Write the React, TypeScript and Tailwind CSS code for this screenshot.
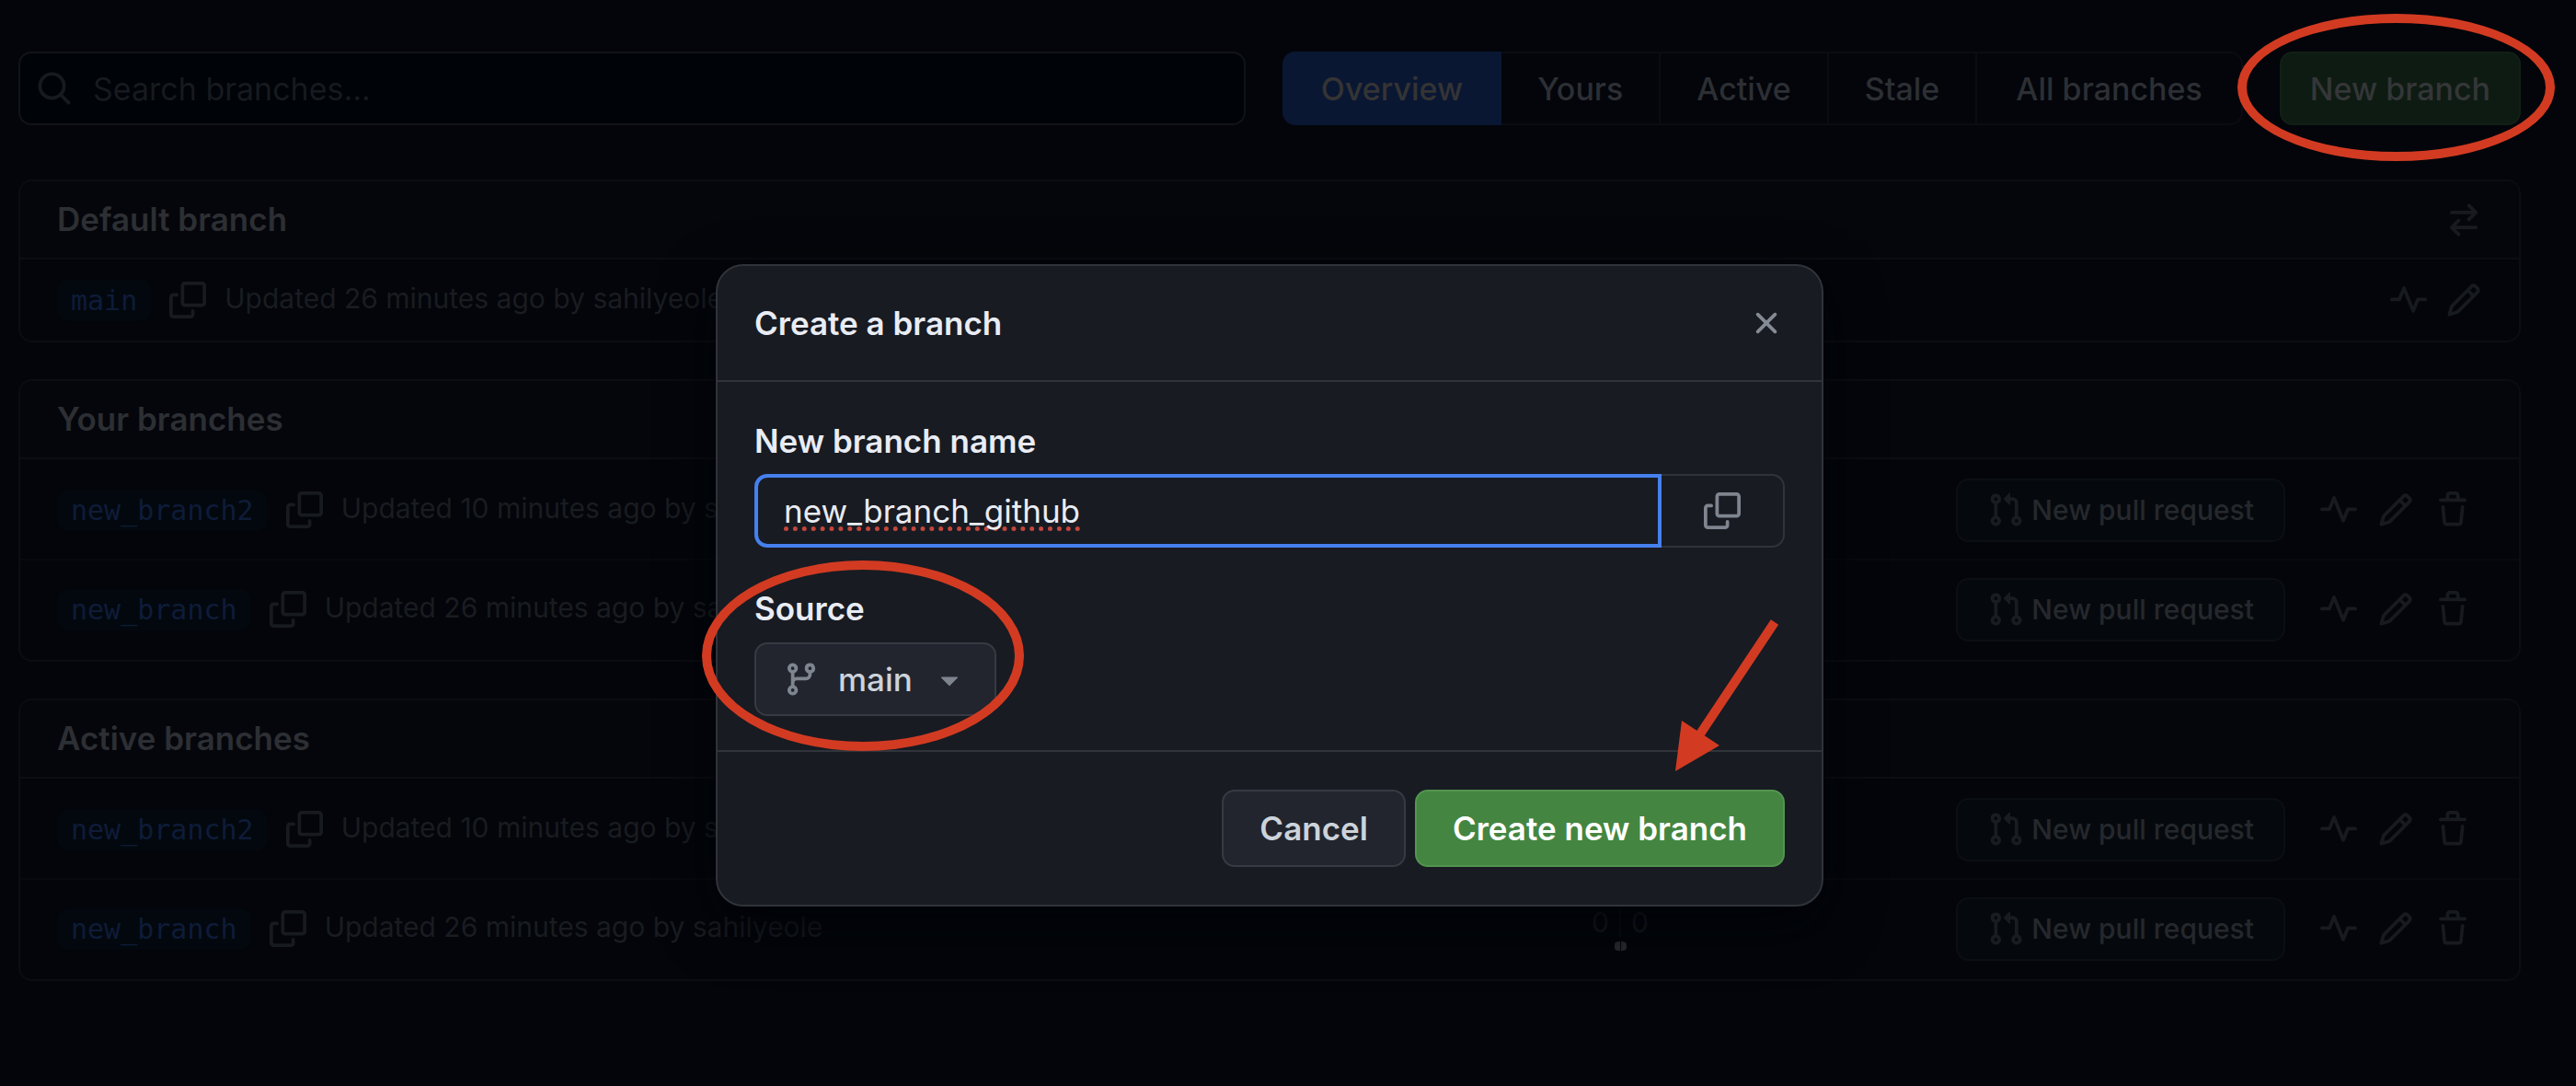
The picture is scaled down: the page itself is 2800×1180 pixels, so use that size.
import React from "react";

const ICONS = {
  search:
    "M10.68 11.74a6 6 0 0 1-7.922-8.982 6 6 0 0 1 8.982 7.922l3.04 3.04a.749.749 0 0 1-.326 1.275.749.749 0 0 1-.734-.215ZM11.5 7a4.499 4.499 0 1 0-8.997 0A4.499 4.499 0 0 0 11.5 7Z",
  copy: "M0 6.75C0 5.784.784 5 1.75 5h1.5a.75.75 0 0 1 0 1.5h-1.5a.25.25 0 0 0-.25.25v7.5c0 .138.112.25.25.25h7.5a.25.25 0 0 0 .25-.25v-1.5a.75.75 0 0 1 1.5 0v1.5A1.75 1.75 0 0 1 9.25 16h-7.5A1.75 1.75 0 0 1 0 14.25ZM5 1.75C5 .784 5.784 0 6.75 0h7.5C15.216 0 16 .784 16 1.75v7.5A1.75 1.75 0 0 1 14.25 11h-7.5A1.75 1.75 0 0 1 5 9.25Zm1.75-.25a.25.25 0 0 0-.25.25v7.5c0 .138.112.25.25.25h7.5a.25.25 0 0 0 .25-.25v-7.5a.25.25 0 0 0-.25-.25Z",
  pulse:
    "M6 2c.306 0 .582.187.696.471L10 10.731l1.304-3.26A.751.751 0 0 1 12 7h3.25a.75.75 0 0 1 0 1.5h-2.742l-1.812 4.528a.751.751 0 0 1-1.392 0L6 4.77 4.696 8.03A.75.75 0 0 1 4 8.5H.75a.75.75 0 0 1 0-1.5h2.742l1.812-4.529A.751.751 0 0 1 6 2Z",
  pencil:
    "M11.013 1.427a1.75 1.75 0 0 1 2.474 0l1.086 1.086a1.75 1.75 0 0 1 0 2.474l-8.61 8.61c-.21.21-.47.364-.756.445l-3.251.93a.75.75 0 0 1-.927-.928l.929-3.25c.081-.286.235-.547.445-.758l8.61-8.61Zm.176 4.823L9.75 4.81l-6.286 6.287a.253.253 0 0 0-.064.108l-.558 1.953 1.953-.558a.253.253 0 0 0 .108-.064Zm1.238-3.763a.25.25 0 0 0-.354 0L10.811 3.75l1.439 1.44 1.263-1.263a.25.25 0 0 0 0-.354Z",
  trash:
    "M11 1.75V3h2.25a.75.75 0 0 1 0 1.5H2.75a.75.75 0 0 1 0-1.5H5V1.75C5 .784 5.784 0 6.75 0h2.5C10.216 0 11 .784 11 1.75ZM4.496 6.675l.66 6.6a.25.25 0 0 0 .249.225h5.19a.25.25 0 0 0 .249-.225l.66-6.6a.75.75 0 0 1 1.492.149l-.66 6.6A1.748 1.748 0 0 1 10.595 15h-5.19a1.75 1.75 0 0 1-1.741-1.575l-.66-6.6a.75.75 0 1 1 1.492-.15ZM6.5 1.75V3h3V1.75a.25.25 0 0 0-.25-.25h-2.5a.25.25 0 0 0-.25.25Z",
  branch:
    "M9.5 3.25a2.25 2.25 0 1 1 3 2.122V6A2.5 2.5 0 0 1 10 8.5H6a1 1 0 0 0-1 1v1.128a2.251 2.251 0 1 1-1.5 0V5.372a2.25 2.25 0 1 1 1.5 0v1.836A2.493 2.493 0 0 1 6 7h4a1 1 0 0 0 1-1v-.628A2.25 2.25 0 0 1 9.5 3.25Zm-6 0a.75.75 0 1 0 1.5 0 .75.75 0 0 0-1.5 0Zm8.25-.75a.75.75 0 1 0 0 1.5.75.75 0 0 0 0-1.5ZM4.25 12a.75.75 0 1 0 0 1.5.75.75 0 0 0 0-1.5Z",
  pullRequest:
    "M1.5 3.25a2.25 2.25 0 1 1 3 2.122v5.256a2.251 2.251 0 1 1-1.5 0V5.372A2.25 2.25 0 0 1 1.5 3.25Zm5.677-.177L9.573.677A.25.25 0 0 1 10 .854V2.5h1A2.5 2.5 0 0 1 13.5 5v5.628a2.251 2.251 0 1 1-1.5 0V5a1 1 0 0 0-1-1h-1v1.646a.25.25 0 0 1-.427.177L7.177 3.427a.25.25 0 0 1 0-.354ZM3.75 2.5a.75.75 0 1 0 0 1.5.75.75 0 0 0 0-1.5Zm0 9.5a.75.75 0 1 0 0 1.5.75.75 0 0 0 0-1.5Zm8.25.75a.75.75 0 1 0 1.5 0 .75.75 0 0 0-1.5 0Z",
  arrowSwitch:
    "M5.22 14.78a.75.75 0 0 0 1.06-1.06L4.56 12h8.69a.75.75 0 0 0 0-1.5H4.56l1.72-1.72a.75.75 0 0 0-1.06-1.06l-3 3a.75.75 0 0 0 0 1.06l3 3Zm5.56-6.5a.75.75 0 1 1-1.06-1.06l1.72-1.72H2.75a.75.75 0 0 1 0-1.5h8.69L9.72 2.28a.75.75 0 0 1 1.06-1.06l3 3a.75.75 0 0 1 0 1.06l-3 3Z",
  x: "M3.72 3.72a.75.75 0 0 1 1.06 0L8 6.94l3.22-3.22a.749.749 0 0 1 1.275.326.749.749 0 0 1-.215.734L9.06 8l3.22 3.22a.749.749 0 0 1-.326 1.275.749.749 0 0 1-.734-.215L8 9.06l-3.22 3.22a.751.751 0 0 1-1.042-.018.751.751 0 0 1-.018-1.042L6.94 8 3.72 4.78a.75.75 0 0 1 0-1.06Z",
  triangleDown:
    "m4.427 7.427 3.396 3.396a.25.25 0 0 0 .354 0l3.396-3.396A.25.25 0 0 0 11.396 7H4.604a.25.25 0 0 0-.177.427Z",
};

function Icon({ name }: { name: keyof typeof ICONS }) {
  return (
    <svg viewBox="0 0 16 16" className="size-10 shrink-0" fill="currentColor" aria-hidden="true">
      <path d={ICONS[name]} />
    </svg>
  );
}

function IconButton({ name, label }: { name: keyof typeof ICONS; label: string }) {
  return (
    <button type="button" aria-label={label} className="text-[#171a1f]">
      <Icon name={name} />
    </button>
  );
}

type Branch = { name: string; updated: string };

function BranchRow({ branch, isDefault }: { branch: Branch; isDefault?: boolean }) {
  return (
    <li
      className={
        isDefault
          ? "flex h-[88px] items-center pr-10 pl-10"
          : "flex h-[108px] items-center border-t-2 border-[#07090e] pr-[52px] pl-10 first:border-transparent"
      }
    >
      <div className="flex min-w-0 flex-1 items-center">
        <a
          href="#"
          className="rounded-xl bg-[#03080e] px-[15px] font-['DejaVu_Sans_Mono',monospace] text-[30px] leading-[45px] text-[#0e1c39]"
        >
          {branch.name}
        </a>
        <span className="ml-5 flex">
          <IconButton name="copy" label={"Copy " + branch.name} />
        </span>
        <span className="ml-5 pb-1 text-[30px] leading-[45px] whitespace-nowrap text-[#191c20]">
          Updated {branch.updated} by sahilyeole
        </span>
      </div>
      {!isDefault && (
        <div className="flex w-[120px] flex-col items-center gap-[5px] text-[30px] leading-8 text-[#191c20]">
          <div className="flex">
            <span className="border-r-2 border-[#0b0d12] pr-[11px]">0</span>
            <span className="pl-[11px]">0</span>
          </div>
          <div className="flex h-[10px] gap-px">
            <span className="w-[6px] rounded-l bg-[#2a2d31]" />
            <span className="w-[6px] rounded-r bg-[#2a2d31]" />
          </div>
        </div>
      )}
      <div className={isDefault ? "flex items-center gap-5" : "flex w-[865px] items-center justify-end gap-[22px]"}>
        {!isDefault && (
          <button
            type="button"
            className="mr-4 flex h-[69px] items-center gap-2 rounded-[14px] border-2 border-[#0b0e12] bg-[#05090e] px-8 text-[30px] font-medium whitespace-nowrap text-[#25282c]"
          >
            <span className="text-[#191c21]">
              <Icon name="pullRequest" />
            </span>
            New pull request
          </button>
        )}
        <IconButton name="pulse" label={"Activity of " + branch.name} />
        <IconButton name="pencil" label={"Rename " + branch.name} />
        {!isDefault && <IconButton name="trash" label={"Delete " + branch.name} />}
      </div>
    </li>
  );
}

function BranchBox({ title, branches, isDefault }: { title: string; branches: Branch[]; isDefault?: boolean }) {
  return (
    <section className="overflow-hidden rounded-[15px] border-2 border-[#0b0d12] bg-[#03050a]">
      <header className="flex h-[85px] items-center justify-between border-b-2 border-[#0b0d12] bg-[#05060b] px-10">
        <h2 className="text-[35px] font-semibold text-[#2c2f33]">{title}</h2>
        {isDefault && <IconButton name="arrowSwitch" label="Switch default branch" />}
      </header>
      <ul className={isDefault ? "" : "pb-[2px]"}>
        {branches.map((b) => (
          <BranchRow key={b.name} branch={b} isDefault={isDefault} />
        ))}
      </ul>
    </section>
  );
}

const MAIN: Branch[] = [{ name: "main", updated: "26 minutes ago" }];
const OWN: Branch[] = [
  { name: "new_branch2", updated: "10 minutes ago" },
  { name: "new_branch", updated: "26 minutes ago" },
];
const TABS = ["Yours", "Active", "Stale", "All branches"];

function CreateBranchDialog() {
  return (
    <div
      role="dialog"
      aria-labelledby="dialog-title"
      className="pointer-events-auto relative w-[1204px] max-w-full rounded-[30px] border-2 border-[#30343a] bg-[#181b22] text-[35px] text-[#e9ecf4] shadow-[0_20px_60px_#000308]"
    >
      <header className="flex h-[126px] items-center justify-between border-b-2 border-[#30343a] px-10">
        <h1 id="dialog-title" className="font-semibold">
          Create a branch
        </h1>
        <button type="button" aria-label="Close" className="text-[#858b94]">
          <Icon name="x" />
        </button>
      </header>
      <div className="flex h-[400px] flex-col items-start px-10 pt-[42px]">
        <label htmlFor="branch-name" className="leading-[45px] font-semibold">
          New branch name
        </label>
        <div className="mt-[13px] flex h-20 w-full">
          <input
            id="branch-name"
            type="text"
            defaultValue="new_branch_github"
            spellCheck={false}
            className="min-w-0 flex-1 rounded-l-[14px] border-4 border-[#4680ee] bg-transparent px-7 underline decoration-[#c3463c] decoration-dotted decoration-5 underline-offset-4 outline-none [text-decoration-skip-ink:none]"
          />
          <button
            type="button"
            aria-label="Copy branch name"
            className="flex w-[134px] items-center justify-center rounded-r-[14px] border-2 border-l-0 border-[#30343a] text-[#7f858f]"
          >
            <Icon name="copy" />
          </button>
        </div>
        <div className="relative mt-11 flex flex-col items-start">
          <span id="source-label" className="leading-[45px] font-semibold">
            Source
          </span>
          <button
            type="button"
            aria-labelledby="source-label"
            className="mt-[14px] flex h-20 items-center gap-5 rounded-[14px] border-2 border-[#373a42] bg-[#22252d] px-[29px] font-medium text-[#ccd3db]"
          >
            <span className="text-[#7f858f]">
              <Icon name="branch" />
            </span>
            main
            <span className="text-[#7f858f]">
              <Icon name="triangleDown" />
            </span>
          </button>
          <span className="pointer-events-none absolute -top-[30px] -left-[57px] h-[207px] w-[350px] rounded-[50%] border-10 border-[#d23b22]" />
        </div>
      </div>
      <footer className="flex h-[168px] items-center justify-end gap-[10px] border-t-2 border-[#30343a] px-10 font-semibold">
        <button
          type="button"
          className="h-[84px] rounded-[14px] border-2 border-[#373a42] bg-[#22252d] px-[39px] text-[#ccd3db]"
        >
          Cancel
        </button>
        <button
          type="button"
          className="relative h-[84px] rounded-[14px] border-2 border-[#52954f] bg-[#448641] px-[39px] text-white"
        >
          Create new branch
          <svg
            viewBox="0 0 120 170"
            className="pointer-events-none absolute right-0 bottom-full mb-[18px] h-[170px] w-[120px]"
            aria-hidden="true"
          >
            <path d="M111 4 29 127" stroke="#d23b22" strokeWidth="10" />
            <path d="M3 166 10 111 51 138Z" fill="#d23b22" />
          </svg>
        </button>
      </footer>
    </div>
  );
}

export default function App() {
  return (
    <div className="relative min-h-screen bg-[#03050a] font-['Inter',sans-serif]">
      <main className="flex flex-col gap-10 pt-14 pr-[60px] pb-10 pl-5">
        <nav className="mb-[19px] flex h-20 items-stretch gap-10 text-[34px]" aria-label="Branches">
          <label className="flex min-w-0 flex-1 items-center gap-[22px] rounded-[14px] border-2 border-[#101318] bg-[#000308] pl-[17px] text-[#171a1e]">
            <Icon name="search" />
            <input
              type="text"
              aria-label="Search branches"
              placeholder="Search branches..."
              className="min-w-0 flex-1 bg-transparent outline-none placeholder:text-[#171a1e]"
            />
          </label>
          <div className="flex font-medium whitespace-nowrap text-[#2c2f34]">
            <a
              href="#"
              aria-current="page"
              className="flex items-center rounded-l-[14px] bg-[#0a1733] px-[42px] text-[#343434]"
            >
              Overview
            </a>
            {TABS.map((t) => (
              <a
                key={t}
                href="#"
                className="flex items-center border-y-2 border-r-2 border-[#0a0c11] px-[39px] last:rounded-r-[14px] last:px-[42px]"
              >
                {t}
              </a>
            ))}
          </div>
          <button
            type="button"
            className="relative rounded-[14px] border-2 border-[#121f16] bg-[#0e1b12] px-[31px] font-medium whitespace-nowrap text-[#343638]"
          >
            New branch
            <span className="pointer-events-none absolute -top-[43px] -right-[39px] -bottom-[41px] -left-[48px] rounded-[50%] border-10 border-[#d23b22]" />
          </button>
        </nav>
        <BranchBox title="Default branch" branches={MAIN} isDefault />
        <BranchBox title="Your branches" branches={OWN} />
        <BranchBox title="Active branches" branches={OWN} />
      </main>
      <div className="pointer-events-none absolute inset-0 flex items-start justify-center pt-[287px] pr-10">
        <CreateBranchDialog />
      </div>
    </div>
  );
}
